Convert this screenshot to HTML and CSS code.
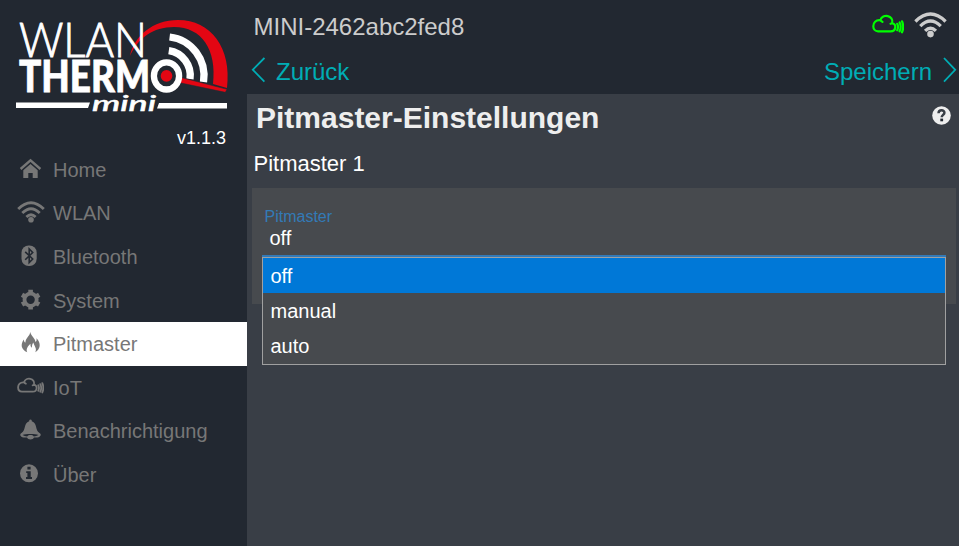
FILE: index.html
```html
<!DOCTYPE html>
<html lang="de">
<head>
<meta charset="utf-8">
<title>WLANThermo MINI</title>
<link rel="stylesheet" href="styles.css">
</head>
<body>
<svg class="sprite" aria-hidden="true">
  <symbol id="wifi" viewBox="0 0 28 22">
    <g fill="none" stroke="currentColor" stroke-width="2.8">
      <path d="M1.2 8Q14 -4.6 26.8 8"/>
      <path d="M5.3 12Q14 3.4 22.7 12"/>
      <path d="M9.4 16Q14 11.5 18.6 16"/>
    </g>
    <circle cx="14" cy="18.7" r="2.8" fill="currentColor"/>
  </symbol>
  <symbol id="cloud" viewBox="0 0 32 20">
    <g fill="none" stroke="currentColor" stroke-width="2.2" stroke-linecap="round">
      <path d="M6 17.3H18.6C24.5 17.3 24.6 9.2 20.2 9.3C22 1.2 10.5-.9 8.3 6.3C3.8 5.7 1.3 9 1.3 12.2C1.3 15.2 3.2 17.3 6 17.3ZM8.3 6.3L10.5 7.8M20.2 9.3L18.5 9.8"/>
      <path d="M25.2 9.8Q26.8 13 25.2 16.2M27.6 8.4Q29.8 12.8 27.6 17.3M30 7.3Q32.4 12.8 30 18.3"/>
    </g>
  </symbol>
</svg>
<div class="app">
  <aside class="sidebar">
    <div class="brand">
      <svg class="logo" viewBox="0 0 247 120">
        <path class="red" d="M130 56C134 36 153 20 178 20C211 20 232 48 227 88L213 84C217 50 202 27 174 27C153 27 138 38 130 56Z"/>
        <g class="wave">
          <path d="M169.6 37A39 39 0 0 1 203.5 82"/>
          <path d="M168.8 50.7A25 25 0 0 1 190 79"/>
        </g>
        <path class="needle" d="M181 77.5L227 89.3L225.3 92.3L180 82.8Z"/>
        <ellipse class="hub" cx="166.5" cy="75.9" rx="12.6" ry="13.6"/>
        <circle class="red" cx="166.5" cy="75.9" r="5.8"/>
        <text class="word-light" x="19" y="56.7" textLength="128" lengthAdjust="spacingAndGlyphs">WLAN</text>
        <text class="word-heavy" x="19" y="91.8" textLength="131" lengthAdjust="spacingAndGlyphs">THERM</text>
        <path class="white" d="M16 102.5H90L88 108H16ZM159 103H227V108.5H157Z"/>
        <text class="word-mini" x="92" y="111.3" textLength="64" lengthAdjust="spacingAndGlyphs">mini</text>
      </svg>
      <div class="version">v1.1.3</div>
    </div>
    <nav class="menu">
      <a class="item"><svg class="icon" viewBox="0 0 28 24"><path fill="none" stroke="currentColor" stroke-width="2.4" d="M3.6 12L13.5 3.3L23.4 12"/><path fill="currentColor" d="M6.3 13.2L13.5 7l7.2 6.2V21h-5v-5h-4.4v5h-5z"/></svg><span>Home</span></a>
      <a class="item"><svg class="icon" viewBox="0 0 28 24"><use href="#wifi" x="0" y="1" width="28" height="22"/></svg><span>WLAN</span></a>
      <a class="item"><svg class="icon" viewBox="0 0 28 24"><rect x="4.5" y="1.5" width="15.2" height="20.5" rx="7.2" fill="currentColor"/><path class="cut" d="M8.2 7.8L15.7 15L12.2 18.6V5L15.7 8.5L8.2 15.8"/></svg><span>Bluetooth</span></a>
      <a class="item"><svg class="icon" viewBox="0 0 28 24"><circle cx="13.6" cy="11.7" r="6.1" fill="none" stroke="currentColor" stroke-width="3.8"/><path stroke="currentColor" stroke-width="4.6" d="M13.6 1.8v3.5M13.6 18v3.6M5 6.8l3 1.7M19.2 14.9l3 1.7M5 16.6l3-1.7M19.2 8.5L22.2 6.8"/></svg><span>System</span></a>
      <a class="item active"><svg class="icon" viewBox="0 0 28 24"><path fill="currentColor" d="M13.2 1C14.2 5.5 18 6.8 18.5 11C19.7 10.2 19.8 8.8 19.4 7.2C24.4 12 23.5 18.4 18.2 21.2C20.3 17.8 17.3 15 16.3 11.5C14.8 13.5 15.2 15 14.7 16.7C13.7 16 13.3 14.4 13.5 12.8C10.6 15.5 8.7 18.4 10.3 21.3C4 18.4 3.2 13.2 6.9 8.4C7 10 7.2 11 8.5 11.6C8.1 7 12.9 5.5 13.2 1Z"/></svg><span>Pitmaster</span></a>
      <a class="item"><svg class="icon" viewBox="0 0 28 24"><use href="#cloud" x="0" y="2" width="27" height="17"/></svg><span>IoT</span></a>
      <a class="item"><svg class="icon" viewBox="0 0 28 24"><path fill="currentColor" d="M13.5 1.5C14.7 1.5 14.8 2.5 14.8 3.2C20.6 5 17.8 12 22.5 15C24.8 16.5 23.8 18.7 20.5 19.5H17C16.2 22 10.9 22 10 19.5H6.5C3.2 18.7 2.2 16.5 4.5 15C9.2 12 6.4 5 12.2 3.2C12.2 2.5 12.3 1.5 13.5 1.5Z"/><path class="cut thin" d="M5.5 17C9 15.6 18 15.6 21.5 17C20 17.9 18.5 18.3 16.8 18.4C15.5 16.5 11.5 16.5 10.2 18.4C8.5 18.3 7 17.9 5.5 17Z"/></svg><span>Benachrichtigung</span></a>
      <a class="item"><svg class="icon" viewBox="0 0 28 24"><circle cx="12" cy="11.3" r="9" fill="currentColor"/><path class="hole" d="M10.4 4.8h3.2v2.8h-3.2zM9.2 9.3h4.5v5.8h1.3v1.8H9v-1.8h1.4v-4H9.2z"/></svg><span>Über</span></a>
    </nav>
  </aside>
  <main class="content">
    <header class="header">
      <div class="status">
        <span class="device">MINI-2462abc2fed8</span>
        <svg class="cloud"><use href="#cloud"/></svg>
        <svg class="signal"><use href="#wifi"/></svg>
      </div>
      <div class="actions">
        <a class="action"><svg class="chevron" viewBox="0 0 14 26"><path d="M13.4 1L1.8 12.8L13.4 24.6"/></svg>Zurück</a>
        <a class="action save">Speichern<svg class="chevron" viewBox="0 0 14 26"><path d="M1 1L12.2 12.8L1 24.6"/></svg></a>
      </div>
    </header>
    <div class="heading">
      <h1>Pitmaster-Einstellungen</h1>
      <svg class="help" viewBox="0 0 19 19"><circle cx="9.5" cy="9.5" r="9.3" fill="currentColor"/><path class="question" d="M6.5 7.3C6.7 3.3 12.6 3.6 12.4 6.8C12.2 8.8 9.7 9 9.7 11.3"/><path class="hole" d="M8.3 12.6h2.8v2.7H8.3z"/></svg>
    </div>
    <h2>Pitmaster 1</h2>
    <section class="card">
      <label class="label">Pitmaster</label>
      <div class="select">off
        <div class="options">
          <div class="option selected">off</div>
          <div class="option">manual</div>
          <div class="option">auto</div>
        </div>
      </div>
    </section>
  </main>
</div>
</body>
</html>
```
FILE: styles.css
```css
* { box-sizing: border-box; }
body {
  margin: 0;
  background: #393e46;
  color: #fff;
  font-family: "Liberation Sans", Arial, sans-serif;
  font-size: 20px;
}
.sprite { display: none; }
.app { display: flex; height: 546px; overflow: hidden; }

.sidebar { width: 247px; flex: none; background: #222831; }
.brand { height: 148px; }
.logo { display: block; width: 247px; height: 120px; }
.red, .needle { fill: #e30613; }
.needle { stroke: #222831; stroke-width: .5; }
.white { fill: #fff; }
.wave { fill: none; stroke: #fff; stroke-width: 7.3; }
.hub { fill: #222831; stroke: #fff; stroke-width: 6.3; }
.word-light { font: 300 47.5px Lato, sans-serif; fill: #fff; stroke: #fff; stroke-width: .9; }
.word-heavy { font: 900 43.5px Lato, sans-serif; fill: #fff; stroke: #fff; stroke-width: .8; }
.word-mini { font: italic 500 22px Lato, sans-serif; fill: #fff; stroke: #fff; stroke-width: .5; }
.version { padding-right: 21px; text-align: right; font-size: 18px; line-height: 36px; }

.item {
  display: flex;
  align-items: center;
  height: 43.6px;
  padding-left: 17px;
  color: #777;
}
.item span { padding-top: 1px; }
.item.active { background: #fff; }
.icon { width: 28px; height: 24px; margin: -2px 8px 0 0; flex: none; }
.cut { fill: none; stroke: #222831; stroke-width: 1.6; }
.cut.thin { stroke: none; fill: #222831; }
.hole { fill: #222831; }

.content { flex: 1; min-width: 0; }
.header { height: 94px; background: #222831; }
.status { display: flex; height: 52px; padding: 0 12px 0 6.5px; color: #ccc; }
.device { flex: 1; font-size: 24px; line-height: 54px; }
.cloud { width: 32px; height: 20px; margin: 14px 10px 0 0; color: #0f0; }
.signal { width: 33px; height: 26px; margin-top: 12px; }
.actions { display: flex; justify-content: space-between; height: 42px; padding: 0 2px 0 4px; }
.action {
  display: flex;
  gap: 11px;
  color: #00adb5;
  font-size: 24px;
  line-height: 40px;
}
.chevron { width: 14px; height: 26px; margin-top: 5px; fill: none; stroke: #00adb5; stroke-width: 1.8; }

.heading { display: flex; justify-content: space-between; height: 50px; padding: 0 8px 0 9px; color: #eee; }
h1 { margin: 0; font-size: 30px; line-height: 48px; }
.help { width: 19px; height: 19px; margin-top: 11.5px; }
.question { fill: none; stroke: #393e46; stroke-width: 2.5; }
h2 { margin: 0; padding-left: 6.5px; font-size: 22px; font-weight: 400; line-height: 40px; height: 44px; }
.card { height: 116px; margin: 0 3px 0 5px; padding: 18px 10px 0; background: #474a4e; }
.label { display: block; padding: 1px 0 0 2.5px; color: #337ab7; font-size: 16px; line-height: 19px; height: 20px; }
.select {
  position: relative;
  height: 31px;
  padding-left: 7.5px;
  line-height: 25px;
  border-bottom: 2px solid #337ab7;
}
.options {
  position: absolute;
  top: 31px;
  left: 0;
  right: 0;
  height: 108px;
  border: 1px solid #a0a0a0;
  background: #474a4e;
}
.option { height: 35px; padding-left: 7.5px; line-height: 36px; }
.option.selected { background: #0078d7; }
```
